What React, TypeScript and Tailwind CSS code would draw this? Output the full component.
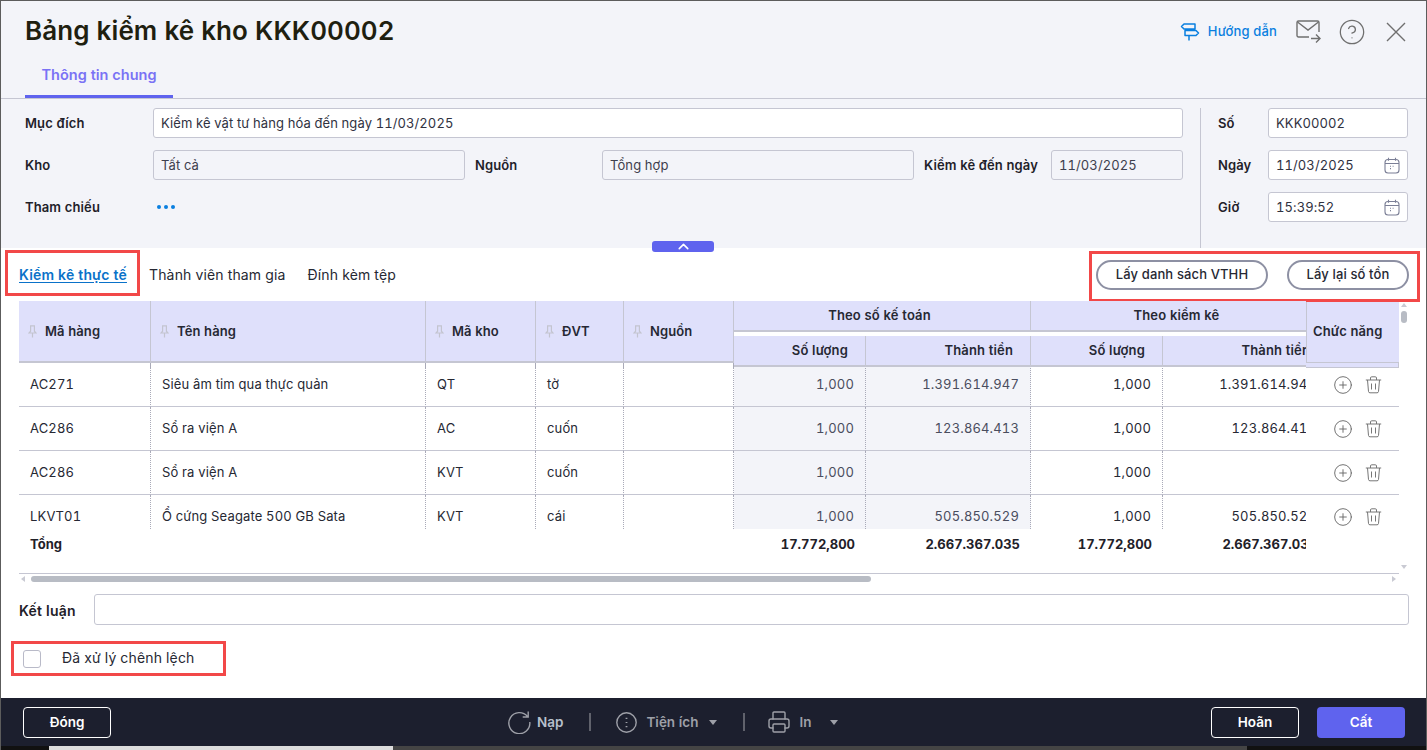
import React from "react";
import { ChevronUp, CircleHelp, CirclePlus, Printer } from "lucide-react";

const columns = "grid grid-cols-[132px_275px_110px_88px_110px_132px_165px_132px_165px]";

const rows = [
  { code: "AC271", name: "Siêu âm tim qua thực quản", store: "QT", unit: "tờ", bookQty: "1,000", bookAmt: "1.391.614.947", countQty: "1,000", countAmt: "1.391.614.947" },
  { code: "AC286", name: "Sổ ra viện A", store: "AC", unit: "cuốn", bookQty: "1,000", bookAmt: "123.864.413", countQty: "1,000", countAmt: "123.864.413" },
  { code: "AC286", name: "Sổ ra viện A", store: "KVT", unit: "cuốn", bookQty: "1,000", bookAmt: "", countQty: "1,000", countAmt: "" },
  { code: "LKVT01", name: "Ổ cứng Seagate 500 GB Sata", store: "KVT", unit: "cái", bookQty: "1,000", bookAmt: "505.850.529", countQty: "1,000", countAmt: "505.850.529" },
];

const PinIcon = () => (
  <svg width="9" height="13" viewBox="0 0 9 13" fill="none" stroke="#c3c4cf" strokeWidth="1.2">
    <path d="M2 .8h5M2.6 .8v5.4L1 8h7L6.4 6.2V.8M4.5 8v4.6" />
  </svg>
);

const CalendarIcon = () => (
  <svg width="16" height="17" viewBox="0 0 16 17" fill="none" stroke="#7b7f96" strokeWidth="1.1">
    <rect x="1" y="2.5" width="14" height="13.5" rx="3" />
    <path d="M1 6.5h14M4.5 .8v3M11.5 .8v3M6 9.2h1M6 11.6h1M8.6 9.2h1" />
  </svg>
);

const GuideIcon = () => (
  <svg width="20" height="20" viewBox="0 0 20 20" fill="none" stroke="#0a7fe0" strokeWidth="1.5" strokeLinejoin="round">
    <path d="M4 2h11v5H4L1.5 4.5zM16 8.5H5v5h11l2.5-2.5zM9 7v1.5M9 13.5v5" />
  </svg>
);

const MailSendIcon = () => (
  <svg width="25" height="23" viewBox="0 0 25 23" fill="none" stroke="#6f6f6f" strokeWidth="1.4">
    <path d="M13 17H2.5A1.5 1.5 0 0 1 1 15.5v-13A1.5 1.5 0 0 1 2.5 1h19A1.5 1.5 0 0 1 23 2.500V12" />
    <path d="M1.500 2l10.500 8 10.500-8M15 18.500h9M20 14.500l4 4-4 4" />
  </svg>
);

const CloseIcon = () => (
  <svg width="20" height="20" viewBox="0 0 20 20" fill="none" stroke="#6f6f6f" strokeWidth="1.4">
    <path d="M1 1l18 18M19 1L1 19" />
  </svg>
);

const TrashIcon = () => (
  <svg width="17" height="18" viewBox="0 0 17 18" fill="none" stroke="#777" strokeWidth="1">
    <path d="M.8 4h15.400M5.500 4V2a1.200 1.200 0 0 1 1.200-1.200h3.600A1.200 1.200 0 0 1 11.500 2v2M2.500 4l1 11.500a1.500 1.500 0 0 0 1.500 1.300h7a1.500 1.500 0 0 0 1.500-1.300L14.500 4M6.500 7.500v6M10.500 7.500v6" />
  </svg>
);

const ReloadIcon = () => (
  <svg width="24" height="24" viewBox="0 0 24 24" fill="none" stroke="#9ea0a8" strokeWidth="1.400">
    <path d="M20.500 6.500A10.500 10.500 0 1 0 22.800 12M21.200 1.500v5.500h-5.500" />
  </svg>
);

const MoreCircleIcon = () => (
  <svg width="21" height="21" viewBox="0 0 21 21" fill="none" stroke="#9ea0a8" strokeWidth="1.400">
    <circle cx="10.500" cy="10.500" r="9.700" />
    <path d="M10.500 5.800v1.200M10.500 9.900v1.200M10.500 14v1.200" strokeWidth="1.800" />
  </svg>
);

const Caret = () => <span className="h-0 w-0 border-x-[4.500px] border-t-[5px] border-x-transparent border-t-[#9ea0a8]" />;

const Label = ({ children, className = "" }: { children: React.ReactNode; className?: string }) => (
  <div className={`pt-[1px] text-[13px] font-semibold tracking-[0.12px] text-[#1f2129] ${className}`}>{children}</div>
);

const Field = ({ value, width, grey, date }: { value: string; width: string; grey?: boolean; date?: boolean }) => (
  <div className={`flex h-[30px] items-center justify-between rounded-[3px] border border-[#c5c6d2] px-[7px] text-[13px] tracking-[0.1px] ${width} ${grey ? "bg-[#f3f4f9] text-[#3e404d]" : "bg-white text-[#30323f]"}`}>
    <span className="pt-[1px]">{value}</span>
    {date && <CalendarIcon />}
  </div>
);

const HeadCell = ({ title }: { title: string }) => (
  <div className="flex h-[67px] flex-col">
    <div className="flex h-[62px] items-center gap-[8px] border-r border-b-2 border-[#c5c6d2] bg-[#dfe0fb] pl-[9px] pt-[1px] text-[13px] font-semibold tracking-[0.1px] text-[#262833]">
      <PinIcon />
      {title}
    </div>
    <div className="h-[5px] border-r border-dotted border-[#a9aab8]" />
  </div>
);

const SubHead = ({ title }: { title: string }) => (
  <div className="flex h-[31px] items-center justify-end whitespace-nowrap border-r border-b-2 border-[#c5c6d2] bg-[#dfe0fb] pr-[17px] text-[13px] font-semibold tracking-[0.15px] text-[#262833]">
    {title}
  </div>
);

const GroupHead = ({ title, wide }: { title: string; wide: string }) => (
  <div className={`flex flex-col ${wide}`}>
    <div className="flex h-[31px] items-center justify-center border-r border-b-2 border-[#c5c6d2] bg-[#dfe0fb] pr-[5px] pt-[1px] text-[13px] font-semibold tracking-[0.15px] text-[#262833]">
      {title}
    </div>
  </div>
);

const Cell = ({ text, grey, right }: { text?: string; grey?: boolean; right?: boolean }) => (
  <div className={`flex h-[44px] items-center border-r border-b border-r-[#a9aab8] border-b-[#c5c6d2] [border-right-style:dotted] whitespace-nowrap text-[13px] tracking-[0.15px] ${right ? "justify-end pr-[11px]" : "pl-[11px]"} ${grey ? "bg-[#f3f4f9] text-[#4a4d5e]" : "text-[#262833]"}`}>
    {text}
  </div>
);

export default function App() {
  return (
    <div className="relative flex h-[750px] w-[1427px] flex-col overflow-hidden border-x border-t border-[#5c5c5c] bg-white font-['Inter',sans-serif] tabular-nums">
      {/* title + tab */}
      <div className="h-[98px] border-b border-[#c5c6d2] bg-[#f3f4f9] pl-[24px]">
        <div className="flex h-[59px] items-center pr-[20px]">
          <h1 className="text-[26px] font-semibold tracking-[0.08px] text-[#1f1f10]">Bảng kiểm kê kho KKK00002</h1>
          <div className="ml-auto flex items-center pt-[2px]">
            <GuideIcon />
            <span className="ml-[8px] text-[13px] font-medium tracking-[0.15px] text-[#0a7fe0]">Hướng dẫn</span>
            <span className="ml-[19px] flex"><MailSendIcon /></span>
            <CircleHelp className="ml-[17px]" size={28} strokeWidth={1.1} color="#6f6f6f" />
            <span className="ml-[20px] flex"><CloseIcon /></span>
          </div>
        </div>
        <div className="flex h-[38px] w-[148px] items-center justify-center border-b-[3px] border-[#5f63ee] pb-[5px] text-[14.500px] font-semibold text-[#7a72f5]">
          Thông tin chung
        </div>
      </div>

      {/* form */}
      <div className="relative flex h-[149px] bg-[#f3f4f9] pl-[24px] pt-[9px]">
        <div className="flex w-[1176px] flex-col gap-[12px] border-r border-[#c5c6d2] pb-[10px]">
          <div className="flex items-center">
            <Label className="w-[128px]">Mục đích</Label>
            <Field value="Kiểm kê vật tư hàng hóa đến ngày 11/03/2025" width="w-[1030px]" />
          </div>
          <div className="flex items-center">
            <Label className="w-[128px]">Kho</Label>
            <Field grey value="Tất cả" width="w-[312px]" />
            <Label className="ml-[10px] w-[127px]">Nguồn</Label>
            <Field grey value="Tổng hợp" width="w-[312px]" />
            <Label className="ml-[10px] w-[127px]">Kiểm kê đến ngày</Label>
            <Field grey value="11/03/2025" width="w-[132px]" />
          </div>
          <div className="flex h-[30px] items-center">
            <Label className="w-[132px]">Tham chiếu</Label>
            <div className="flex gap-[3px]">
              <span className="h-[4px] w-[4px] rounded-full bg-[#0a7fe0]" />
              <span className="h-[4px] w-[4px] rounded-full bg-[#0a7fe0]" />
              <span className="h-[4px] w-[4px] rounded-full bg-[#0a7fe0]" />
            </div>
          </div>
        </div>
        <div className="ml-[17px] flex flex-col gap-[12px]">
          <div className="flex items-center">
            <Label className="w-[50px]">Số</Label>
            <Field value="KKK00002" width="w-[140px]" />
          </div>
          <div className="flex items-center">
            <Label className="w-[50px]">Ngày</Label>
            <Field date value="11/03/2025" width="w-[140px]" />
          </div>
          <div className="flex items-center">
            <Label className="w-[50px]">Giờ</Label>
            <Field date value="15:39:52" width="w-[140px]" />
          </div>
        </div>
        <div className="absolute bottom-[-4px] left-[651px] flex h-[11px] w-[62px] items-center justify-center rounded-[3px] bg-[#5f63ee]">
          <ChevronUp size={17} strokeWidth={2.2} color="#fff" />
        </div>
      </div>

      {/* tabs + actions */}
      <div className="flex h-[53px] items-center pl-[18px] pr-[17px] text-[14px] tracking-[0.16px] text-[#262833]">
        <span className="font-semibold text-[#0a72c9] underline underline-offset-2">Kiểm kê thực tế</span>
        <span className="ml-[22px]">Thành viên tham gia</span>
        <span className="ml-[22px]">Đính kèm tệp</span>
        <button className="ml-auto h-[30px] w-[172px] rounded-full border-2 border-[#8d90a3] text-[13px] font-medium tracking-[0.12px] text-[#262833]">Lấy danh sách VTHH</button>
        <button className="ml-[19px] h-[30px] w-[122px] rounded-full border-2 border-[#8d90a3] text-[13px] font-medium tracking-[0.12px] text-[#262833]">Lấy lại số tồn</button>
      </div>

      {/* table */}
      <div className="flex pl-[18px]">
        <div className="w-[1287px] overflow-hidden">
          <div className={`${columns} relative z-10`}>
            <HeadCell title="Mã hàng" />
            <HeadCell title="Tên hàng" />
            <HeadCell title="Mã kho" />
            <HeadCell title="ĐVT" />
            <HeadCell title="Nguồn" />
            <div className="col-span-4 flex flex-col">
              <div className="flex">
                <GroupHead title="Theo số kế toán" wide="w-[297px]" />
                <GroupHead title="Theo kiểm kê" wide="flex-1" />
              </div>
              <div className="h-[4px] bg-white" />
              <div className="grid grid-cols-[132px_165px_132px_165px]">
                <SubHead title="Số lượng" />
                <SubHead title="Thành tiền" />
                <SubHead title="Số lượng" />
                <SubHead title="Thành tiền" />
              </div>
            </div>
          </div>
          <div className="-mt-[5px] h-[166px] overflow-hidden">
            {rows.map((r, i) => (
              <div key={i} className={columns}>
                <Cell text={r.code} />
                <Cell text={r.name} />
                <Cell text={r.store} />
                <Cell text={r.unit} />
                <Cell />
                <Cell right grey text={r.bookQty} />
                <Cell right grey text={r.bookAmt} />
                <Cell right text={r.countQty} />
                <Cell right text={r.countAmt} />
              </div>
            ))}
          </div>
          <div className={`${columns} h-[44px] pt-[6px] text-[13px] font-bold text-[#1f2129]`}>
            <div className="pl-[11px]">Tổng</div>
            <div />
            <div />
            <div />
            <div />
            <div className="pr-[11px] text-right">17.772,800</div>
            <div className="pr-[11px] text-right">2.667.367.035</div>
            <div className="pr-[11px] text-right">17.772,800</div>
            <div className="whitespace-nowrap pr-[11px] text-right">2.667.367.035</div>
          </div>
        </div>

        {/* fixed action column */}
        <div className="w-[93px]">
          <div className="flex h-[62px] items-center border-l border-b border-[#c5c6d2] bg-[#dfe0fb] pl-[6px] pt-[1px] text-[13px] font-semibold tracking-[0.1px] text-[#262833]">Chức năng</div>
          <div className="h-[5px] border-b border-[#c5c6d2] bg-[#dfe0fb] pl-[21px]"><div className="h-full border-r border-[#c5c6d2]" /></div>
          <div className="h-[161px] overflow-hidden">
            {rows.map((_, i) => (
              <div key={i} className={`flex items-center gap-[12px] border-b border-[#c5c6d2] pl-[27px] ${i === 0 ? "h-[39px] pb-[5px]" : "h-[44px]"}`}>
                <CirclePlus size={20} strokeWidth={1.1} color="#666" />
                <TrashIcon />
              </div>
            ))}
          </div>
        </div>

        {/* vertical scrollbar */}
        <div className="flex w-[10px] flex-col items-center pt-[2px]">
          <span className="h-0 w-0 border-x-[3px] border-b-[4px] border-x-transparent border-b-[#c9cad3]" />
          <span className="mt-[4px] h-[12px] w-[6px] rounded-[3px] bg-[#b8bcc4]" />
          <span className="mt-auto mb-[4px] h-0 w-0 border-x-[3px] border-t-[4px] border-x-transparent border-t-[#c9cad3]" />
        </div>
      </div>

      {/* horizontal scrollbar */}
      <div className="ml-[18px] flex h-[11px] w-[1380px] items-center border-t border-[#c5c6d2]">
        <span className="ml-[2px] h-0 w-0 border-y-[3px] border-r-[4px] border-y-transparent border-r-[#c9cad3]" />
        <span className="ml-[6px] h-[6px] w-[840px] rounded-[3px] bg-[#b8bcc4]" />
        <span className="ml-auto mr-[3px] h-0 w-0 border-y-[3px] border-l-[4px] border-y-transparent border-l-[#c9cad3]" />
      </div>

      {/* conclusion */}
      <div className="mt-[10px] flex items-center pl-[18px]">
        <div className="w-[75px] pt-[1px] text-[14px] font-semibold tracking-[0.2px] text-[#1f2129]">Kết luận</div>
        <div className="h-[31px] w-[1315px] rounded-[3px] border border-[#c5c6d2]" />
      </div>
      <div className="mt-[22px] flex items-center pl-[22px]">
        <div className="h-[18px] w-[18px] rounded-[3px] border border-[#b9bac8]" />
        <span className="ml-[21px] pb-[2px] text-[14px] tracking-[0.16px] text-[#262833]">Đã xử lý chênh lệch</span>
      </div>

      {/* footer */}
      <div className="mt-auto flex h-[48px] items-center bg-[#1c1f2e] pl-[22px] pr-[21px]">
        <button className="h-[31px] w-[88px] rounded-[4px] border border-white text-[13.500px] font-semibold text-white">Đóng</button>
        <div className="ml-[396px] flex items-center text-[13.500px] font-semibold text-[#9ea0a8]">
          <ReloadIcon />
          <span className="ml-[6px] text-[#b7c0cc]">Nạp</span>
          <span className="ml-[26px] h-[18px] w-[2px] bg-[#60626c]" />
          <span className="ml-[25px] flex"><MoreCircleIcon /></span>
          <span className="ml-[9px]">Tiện ích</span>
          <span className="ml-[11px] flex"><Caret /></span>
          <span className="ml-[26px] h-[18px] w-[2px] bg-[#60626c]" />
          <Printer className="ml-[22px]" size={24} strokeWidth={1.4} color="#9ea0a8" />
          <span className="ml-[8px]">In</span>
          <span className="ml-[19px] flex"><Caret /></span>
        </div>
        <button className="ml-auto h-[31px] w-[88px] rounded-[4px] border border-white text-[13.500px] font-semibold text-white">Hoãn</button>
        <button className="ml-[18px] h-[31px] w-[88px] rounded-[4px] bg-[#5f63ee] text-[13.500px] font-semibold text-white">Cất</button>
      </div>
      <div className="flex h-[4px] bg-[#111]">
        <div className="ml-[48px] w-[344px] bg-[#dcdcdc]" />
        <div className="w-[854px] bg-[#444]" />
      </div>

      {/* red annotation boxes */}
      <div className="absolute left-[4px] top-[249px] h-[46px] w-[135px] border-[3px] border-[#f24848]" />
      <div className="absolute left-[1088px] top-[250px] h-[51px] w-[331px] border-[3px] border-[#f24848]" />
      <div className="absolute left-[10px] top-[640px] h-[35px] w-[215px] border-[3px] border-[#f24848]" />
    </div>
  );
}
